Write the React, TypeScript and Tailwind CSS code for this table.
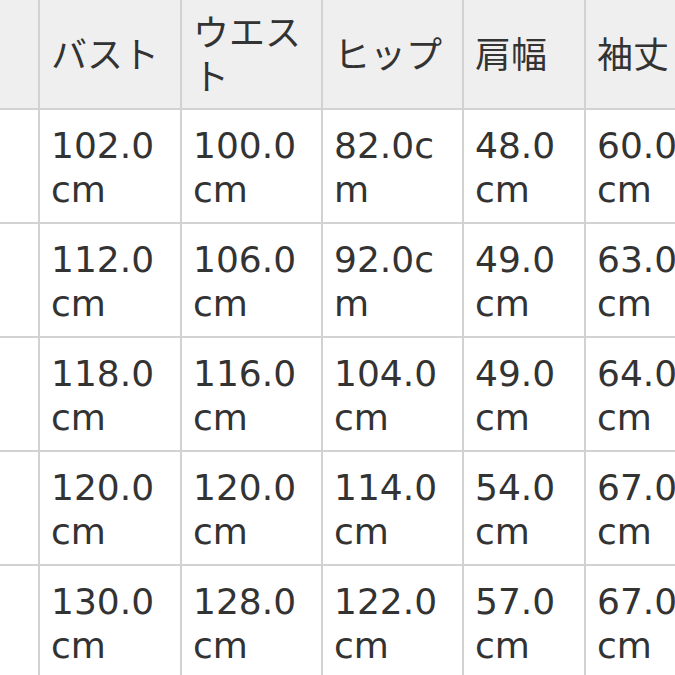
import React from 'react';

const headers = ['', 'バスト', 'ウエスト', 'ヒップ', '肩幅', '袖丈'];

const rows = [
  ['102.0', '100.0', '82.0', '48.0', '60.0'],
  ['112.0', '106.0', '92.0', '49.0', '63.0'],
  ['118.0', '116.0', '104.0', '49.0', '64.0'],
  ['120.0', '120.0', '114.0', '54.0', '67.0'],
  ['130.0', '128.0', '122.0', '57.0', '67.0'],
];

const widths = ['w-[40px]', 'w-[142px]', 'w-[141px]', 'w-[141px]', 'w-[122px]', 'w-[122px]'];

function Cell({ w, text }: { w: string; text: string }) {
  return (
    <div className={`${w} shrink-0 h-full flex items-center border-r-2 border-[#d2d2d2] pl-[11px] pr-[11px] pt-[3px]`}>
      <div className="w-full break-all">{text}</div>
    </div>
  );
}

export default function App() {
  return (
    <div
      className="w-[675px] h-[675px] overflow-hidden bg-white text-[#333] text-[36px] leading-[44px]"
      style={{ fontFamily: '"DejaVu Sans", "Noto Sans CJK JP", sans-serif' }}
    >
      <div className="flex h-[110px] bg-[#efefef] border-b-2 border-[#d2d2d2] w-max">
        {headers.map((h, i) => (
          <Cell key={i} w={widths[i]} text={h} />
        ))}
      </div>
      {rows.map((r, ri) => (
        <div key={ri} className="flex h-[114px] border-b-2 border-[#d2d2d2] w-max">
          <Cell w={widths[0]} text="" />
          {r.map((v, i) => (
            <Cell key={i} w={widths[i + 1]} text={`${v}cm`} />
          ))}
        </div>
      ))}
    </div>
  );
}
